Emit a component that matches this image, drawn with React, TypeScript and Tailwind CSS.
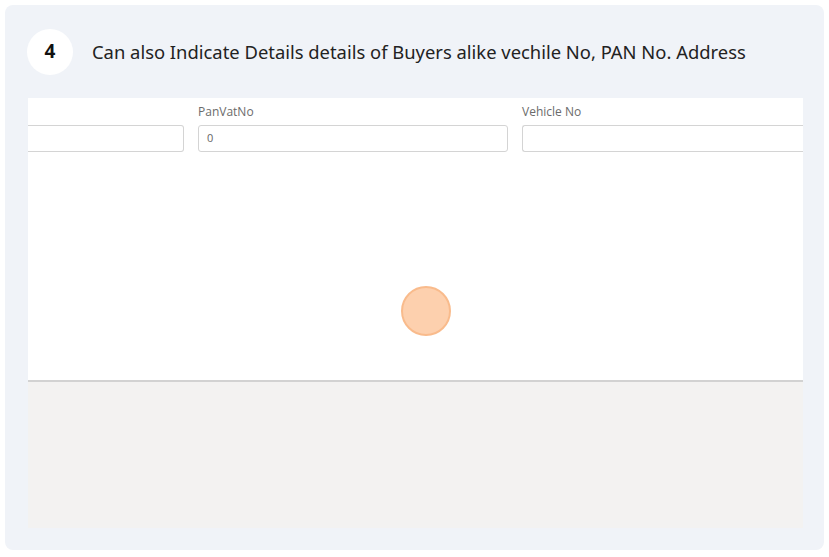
export default function App() {
  return (
    <div className="w-[829px] h-[557px] bg-white p-[5px]" style={{ fontFamily: '"Noto Sans", sans-serif' }}>
      <div className="w-[819px] h-[545px] rounded-[8px] bg-[#f0f3f8] flex flex-col">
        <div className="flex items-center h-[93px] pl-[22px]">
          <div className="w-[46px] h-[46px] rounded-full bg-white flex items-center justify-center text-[19px] font-bold text-[#111]">4</div>
          <div className="ml-[19px] text-[18.4px] text-[#222]">Can also Indicate Details details of Buyers alike vechile No, PAN No. Address</div>
        </div>
        <div className="ml-[23px] w-[775px] h-[430px] flex flex-col overflow-hidden" style={{ fontFamily: '"Open Sans", sans-serif' }}>
          <div className="h-[282px] bg-white relative">
            <div className="flex pt-[6px]">
              <div className="w-[156px] shrink-0 flex flex-col">
                <div className="h-[21px]" />
                <div className="h-[27px] border border-[#d4d4d4] border-l-0 rounded-r-[3px] bg-white" />
              </div>
              <div className="w-[310px] shrink-0 ml-[14px] flex flex-col">
                <div className="h-[21px] text-[12px] text-[#6b6b6b] leading-[16px]">PanVatNo</div>
                <div className="h-[27px] border border-[#d4d4d4] rounded-[3px] bg-white flex items-center pl-[8px] text-[11px] text-[#666]">0</div>
              </div>
              <div className="flex-1 ml-[14px] flex flex-col">
                <div className="h-[21px] text-[12px] text-[#6b6b6b] leading-[16px]">Vehicle No</div>
                <div className="h-[27px] border border-[#d4d4d4] border-r-0 rounded-l-[3px] bg-white" />
              </div>
            </div>
            <div className="absolute left-[373px] top-[188px] w-[50px] h-[50px] rounded-full bg-[#fdd0ae] border-2 border-[#f9bb8c]" />
          </div>
          <div className="h-[2px] bg-[#d2d2d2]" />
          <div className="flex-1 bg-[#f3f2f1]" />
        </div>
      </div>
    </div>
  );
}
